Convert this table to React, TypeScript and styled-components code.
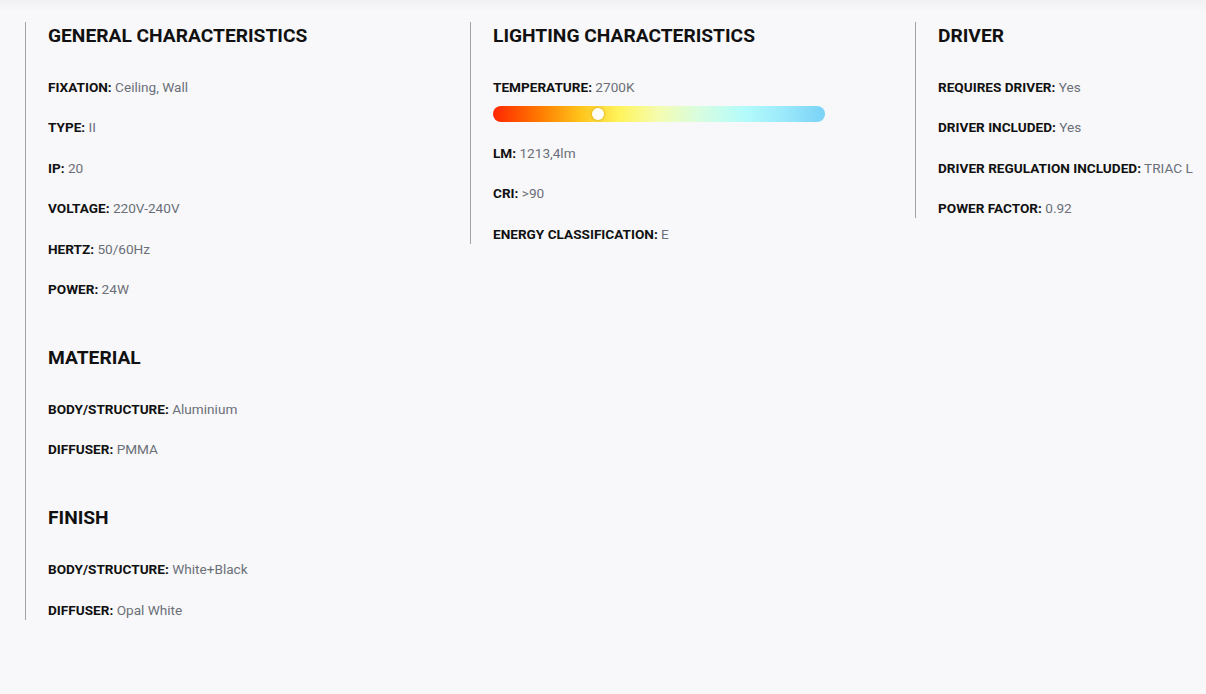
import React from "react";
import styled, { createGlobalStyle } from "styled-components";

const GlobalStyle = createGlobalStyle`
  html, body {
    margin: 0;
    padding: 0;
    background: linear-gradient(to bottom, #f1f1f3 0px, #f8f8fa 12px, #f8f8fa 100%);
    font-family: Roboto, "Liberation Sans", Arial, sans-serif;
    overflow: hidden;
  }
  #root { min-height: 694px; }
`;

const Page = styled.div`
  display: grid;
  grid-template-columns: 445px 445px 445px;
  align-items: start;
  padding: 22px 0 0 25px;
  width: 1206px;
  height: 694px;
  box-sizing: border-box;
  overflow: hidden;
`;

const Column = styled.div`
  border-left: 1px solid #a3a3a6;
  padding-left: 22px;
  display: flex;
  flex-direction: column;
  gap: 45px;
  white-space: nowrap;
`;

const Section = styled.section`
  display: flex;
  flex-direction: column;
`;

const Heading = styled.h2`
  margin: 1px 0 28px 0;
  font-size: 19.2px;
  line-height: 26px;
  font-weight: 700;
  color: #111;
  letter-spacing: 0;
`;

const RowList = styled.div`
  display: flex;
  flex-direction: column;
  gap: 20.4px;
`;

const Row = styled.div`
  font-size: 13.6px;
  line-height: 20px;
  color: #6b6f78;
`;

const Label = styled.span`
  font-weight: 700;
  color: #111;
`;

const Bar = styled.div`
  position: relative;
  width: 332px;
  height: 16px;
  border-radius: 8px;
  margin: 9px 0 21px 0;
  background: linear-gradient(
    to right,
    #ff2600 0%,
    #ff7a00 14%,
    #ffc21a 26%,
    #fff45c 38%,
    #f4fcb0 50%,
    #d8fde0 62%,
    #b3fbfb 76%,
    #9ae8fb 88%,
    #7ad2f6 100%
  );
`;

const Knob = styled.div`
  position: absolute;
  top: 2px;
  width: 12px;
  height: 12px;
  border-radius: 50%;
  background: #fff;
  box-shadow: 0 0 3px rgba(120, 90, 0, 0.45);
  transform: translateX(-50%);
`;

type Item = [string, string];

const Rows: React.FC<{ items: Item[] }> = ({ items }) => (
  <RowList>
    {items.map(([k, v]) => (
      <Row key={k}>
        <Label>{k}:</Label> {v}
      </Row>
    ))}
  </RowList>
);

export default function App() {
  const knobLeft = 105;
  return (
    <>
      <GlobalStyle />
      <Page>
        <Column>
          <Section>
            <Heading>GENERAL CHARACTERISTICS</Heading>
            <Rows
              items={[
                ["FIXATION", "Ceiling, Wall"],
                ["TYPE", "II"],
                ["IP", "20"],
                ["VOLTAGE", "220V-240V"],
                ["HERTZ", "50/60Hz"],
                ["POWER", "24W"],
              ]}
            />
          </Section>
          <Section>
            <Heading>MATERIAL</Heading>
            <Rows
              items={[
                ["BODY/STRUCTURE", "Aluminium"],
                ["DIFFUSER", "PMMA"],
              ]}
            />
          </Section>
          <Section>
            <Heading>FINISH</Heading>
            <Rows
              items={[
                ["BODY/STRUCTURE", "White+Black"],
                ["DIFFUSER", "Opal White"],
              ]}
            />
          </Section>
        </Column>
        <Column>
          <Section>
            <Heading>LIGHTING CHARACTERISTICS</Heading>
            <Row>
              <Label>TEMPERATURE:</Label> 2700K
            </Row>
            <Bar>
              <Knob style={{ left: `${knobLeft}px` }} />
            </Bar>
            <Rows
              items={[
                ["LM", "1213,4lm"],
                ["CRI", ">90"],
                ["ENERGY CLASSIFICATION", "E"],
              ]}
            />
          </Section>
        </Column>
        <Column>
          <Section>
            <Heading>DRIVER</Heading>
            <Rows
              items={[
                ["REQUIRES DRIVER", "Yes"],
                ["DRIVER INCLUDED", "Yes"],
                ["DRIVER REGULATION INCLUDED", "TRIAC L"],
                ["POWER FACTOR", "0.92"],
              ]}
            />
          </Section>
        </Column>
      </Page>
    </>
  );
}
